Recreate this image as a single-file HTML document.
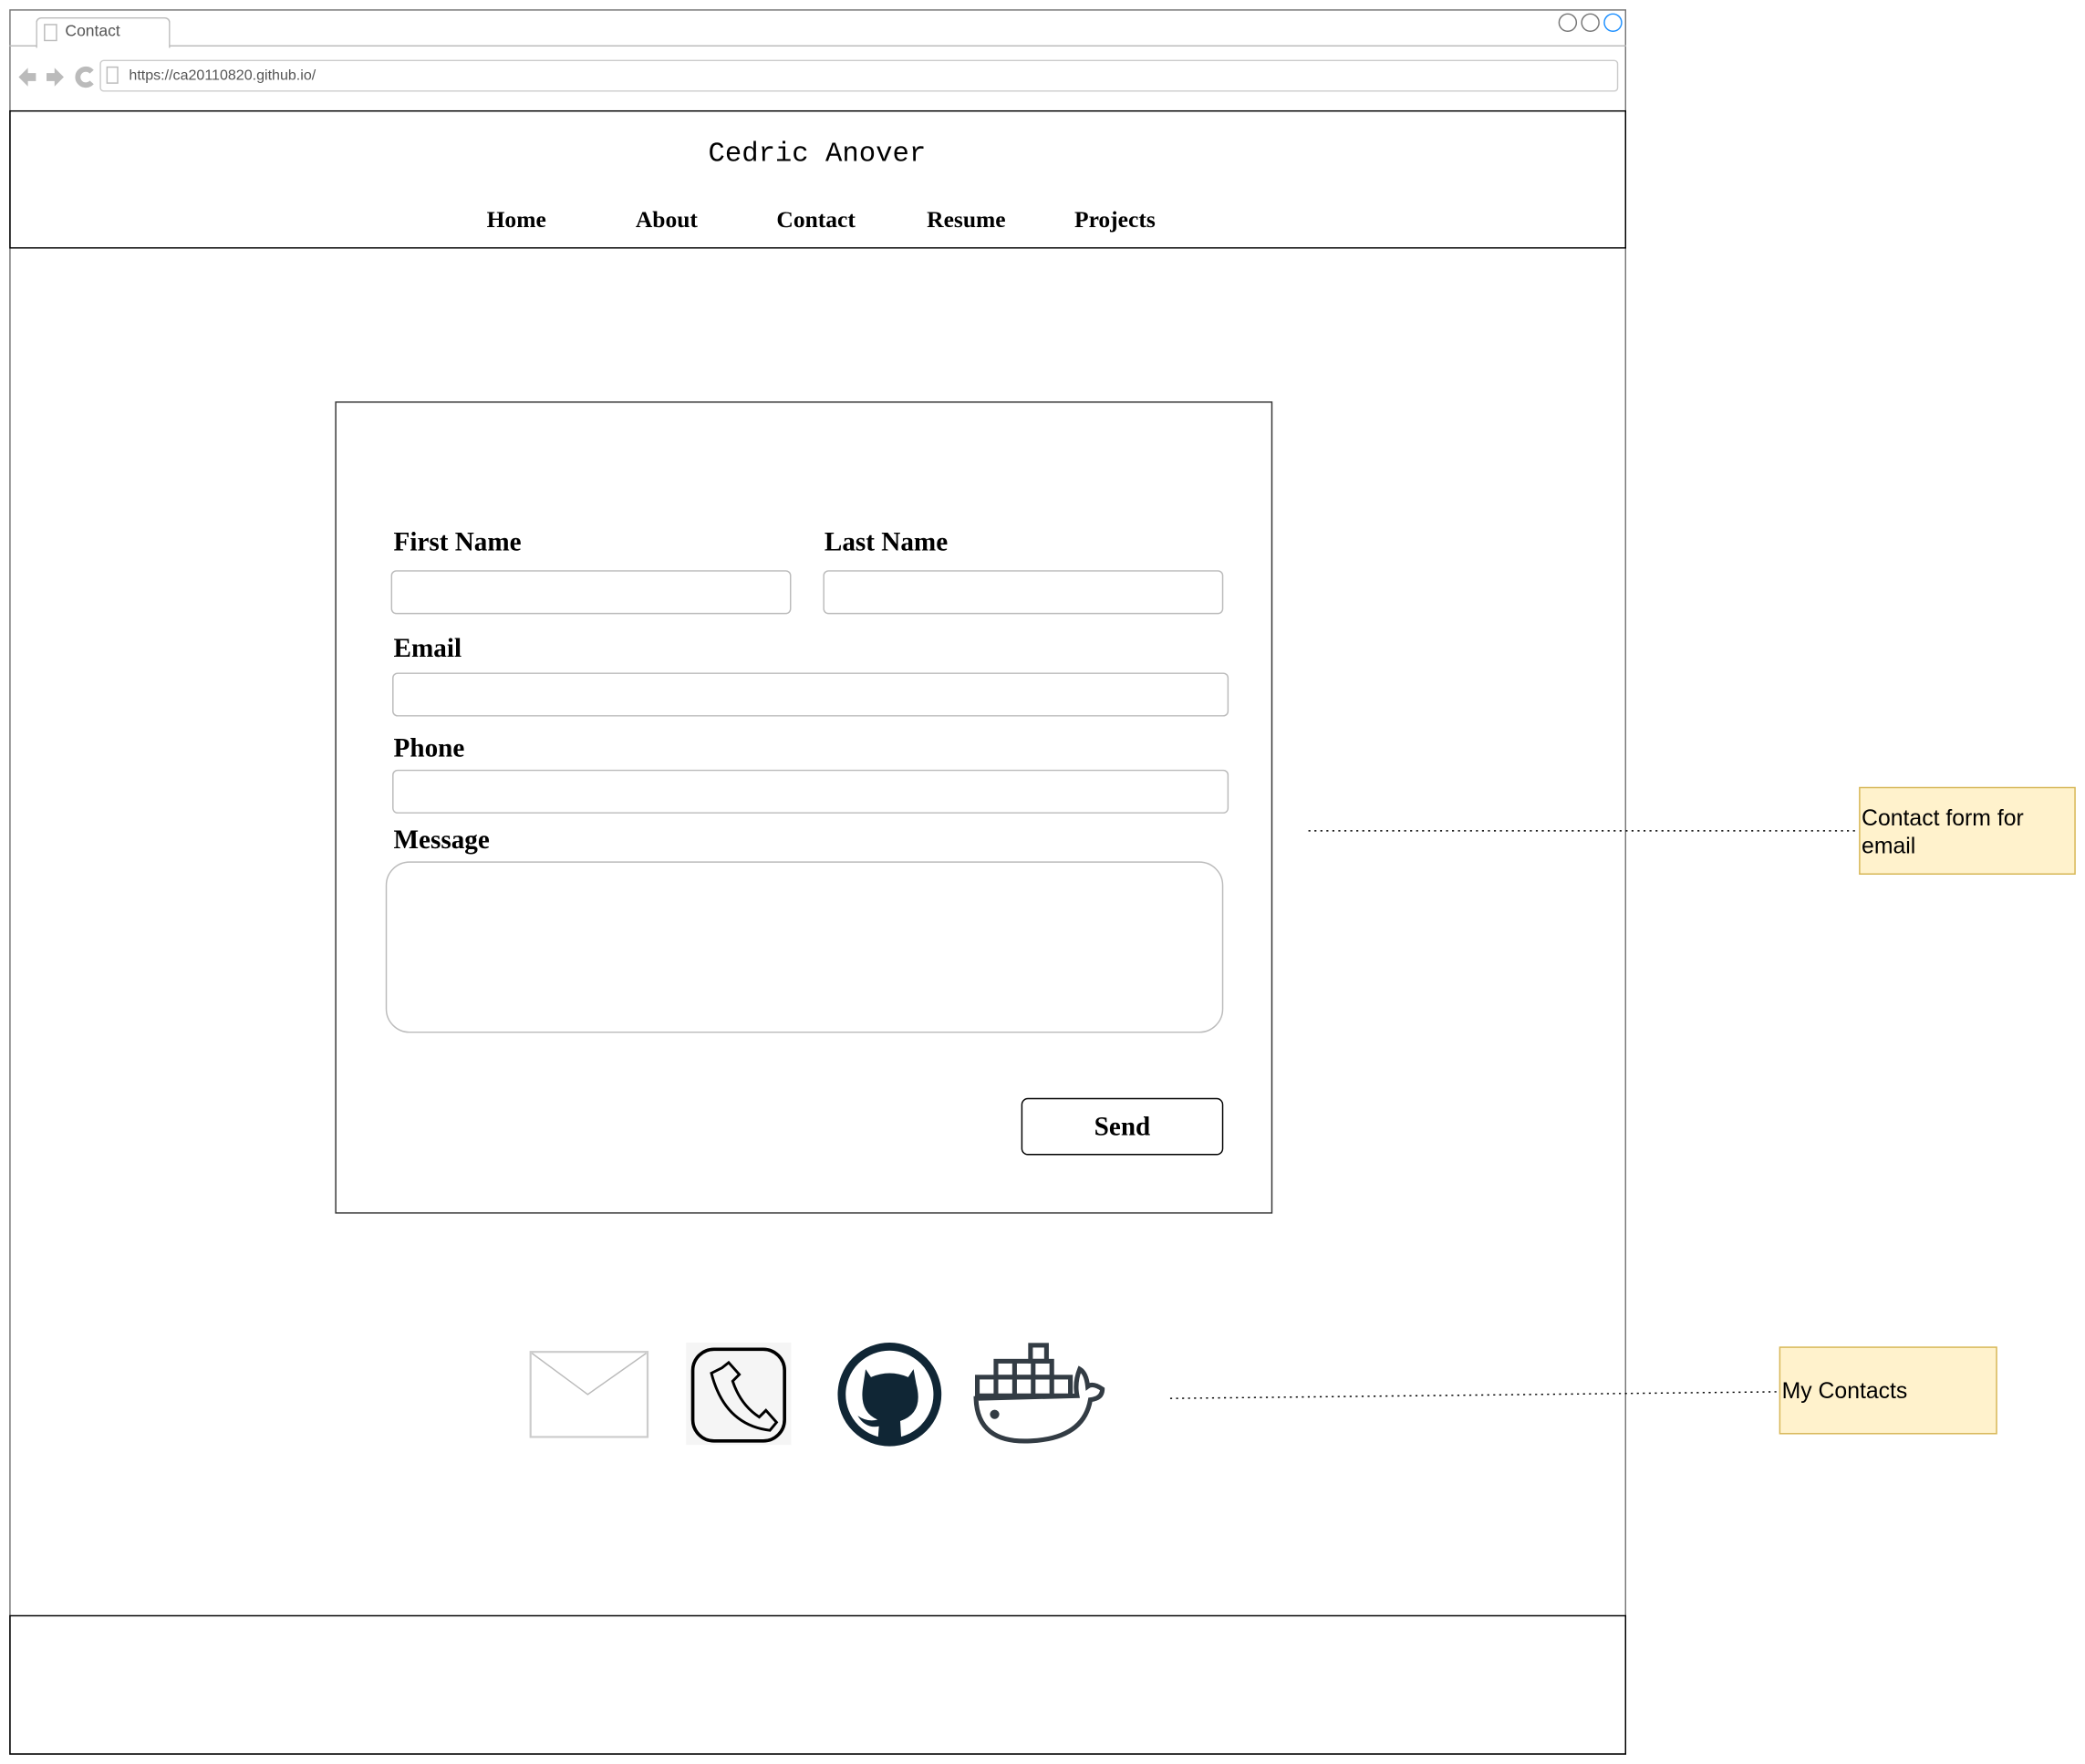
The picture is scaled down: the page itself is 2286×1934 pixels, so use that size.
<!DOCTYPE html>
<html><head><meta charset="utf-8"><style>
html,body{margin:0;padding:0;background:#fff;width:2286px;height:1934px;overflow:hidden}
#w{position:absolute;left:0;top:0;width:1568px;height:1327px;transform:scale(1.4579,1.4574);transform-origin:0 0}
.a{position:absolute;box-sizing:border-box}
.nav{position:absolute;top:155px;font:bold 17.5px "Liberation Serif",serif;color:#000}
.lbl{position:absolute;font:bold 20px "Liberation Serif",serif;color:#000}
.inp{position:absolute;box-sizing:border-box;border:1px solid #bbb;border-radius:4px;background:#fff}
.note{position:absolute;box-sizing:border-box;background:#fff2cc;border:1px solid #d6b656;font:17px "Liberation Sans",sans-serif;color:#000;padding:0 1px;line-height:21px}
</style></head><body><div id="w">
<div class="a" style="left:7px;top:7px;width:1216px;height:1313px;border:1px solid #777"></div>
<div class="a" style="left:7px;top:34px;width:1216px;height:1px;background:#bbb"></div>
<div class="a" style="left:27px;top:13px;width:101px;height:23px;border:1px solid #bbb;border-bottom:none;border-radius:4px 4px 0 0;background:#fff"></div>
<div class="a" style="left:33px;top:18px;width:10px;height:13px;border:1px solid #bbb"></div>
<div class="a" style="left:49px;top:16px;font:12px 'Liberation Sans',sans-serif;color:#555">Contact</div>
<div class="a" style="left:1172px;top:10px;width:14px;height:14px;border:1px solid #777;border-radius:50%"></div>
<div class="a" style="left:1189px;top:10px;width:14px;height:14px;border:1px solid #777;border-radius:50%"></div>
<div class="a" style="left:1206px;top:10px;width:14px;height:14px;border:1px solid #1e90ff;border-radius:50%"></div>
<svg class="a" style="left:12px;top:48px" width="64" height="20"><path d="M2 10 L9 3 V7 H15 V13 H9 V17 Z" fill="#bbb"/><path d="M36 10 L29 3 V7 H23 V13 H29 V17 Z" fill="#bbb"/><path d="M57 6 A6 6 0 1 0 57 14" stroke="#bbb" stroke-width="4" fill="none"/></svg>
<div class="a" style="left:75px;top:45px;width:1142px;height:24px;border:1px solid #ccc;border-radius:3px"></div>
<div class="a" style="left:80px;top:50px;width:9px;height:13px;border:1px solid #bbb"></div>
<div class="a" style="left:97px;top:51px;font:11px 'Liberation Sans',sans-serif;color:#555">https://ca20110820.github.io/</div>
<div class="a" style="left:7px;top:83px;width:1216px;height:104px;border:1px solid #000"></div>
<div class="a" style="left:0;width:1229px;top:105px;text-align:center;font:21px 'Liberation Mono',monospace">Cedric Anover</div>
<div class="nav" style="left:366px">Home</div><div class="nav" style="left:478px">About</div><div class="nav" style="left:584px">Contact</div><div class="nav" style="left:697px">Resume</div><div class="nav" style="left:808px">Projects</div>
<div class="a" style="left:252px;top:302px;width:705px;height:611px;border:1px solid #333"></div>
<div class="lbl" style="left:296px;top:397px">First Name</div>
<div class="lbl" style="left:620px;top:397px">Last Name</div>
<div class="inp" style="left:294px;top:429px;width:301px;height:33px"></div>
<div class="inp" style="left:619px;top:429px;width:301px;height:33px"></div>
<div class="lbl" style="left:296px;top:477px">Email</div>
<div class="inp" style="left:295px;top:506px;width:629px;height:33px"></div>
<div class="lbl" style="left:296px;top:552px">Phone</div>
<div class="inp" style="left:295px;top:579px;width:629px;height:33px"></div>
<div class="lbl" style="left:296px;top:621px">Message</div>
<div class="inp" style="left:290px;top:648px;width:630px;height:129px;border-radius:18px"></div>
<div class="a" style="left:768px;top:826px;width:152px;height:43px;border:1px solid #000;border-radius:5px;text-align:center;font:bold 20px 'Liberation Serif',serif;line-height:42px">Send</div>
<svg class="a" style="left:0;top:0" width="1568" height="1327">
<line x1="984" y1="625" x2="1398" y2="625" stroke="#000" stroke-dasharray="1.5 3"/>
<line x1="880" y1="1052" x2="1338" y2="1047" stroke="#000" stroke-dasharray="1.5 3"/>
<rect x="399" y="1017" width="88" height="64" fill="#fff" stroke="#ccc" stroke-width="1.5"/>
<path d="M400 1018 L442 1049 L486 1018" fill="none" stroke="#bbb"/>
<rect x="516" y="1010" width="79" height="77" fill="#f5f5f5"/>
<rect x="521" y="1015" width="69" height="69" rx="16" fill="none" stroke="#000" stroke-width="2.5"/>
<path d="M543 1029 L548 1025 L556 1034 L551 1039 Q557 1057 571 1066 L576 1061 L584 1070 L579 1076 Q545 1072 535 1033 Z" fill="none" stroke="#000" stroke-width="2"/>
<circle cx="669" cy="1049" r="36" fill="#fff" stroke="#102635" stroke-width="6"/>
<path d="M651 1030 L655 1036 Q669 1030 683 1036 L687 1030 L689 1041 Q695 1063 677 1069 L678 1086 L660 1086 L661 1073 Q651 1075 645 1065 Q652 1070 660 1068 Q646 1062 649 1043 Z" fill="#102635"/>
<g fill="none" stroke="#333c44" stroke-width="3.5">
<path d="M734 1052 Q735 1086 775 1084 Q815 1082 820 1053 Q829 1052 829 1045 Q822 1040 818 1043 Q817 1033 812 1030 Q808 1040 810 1050 L734 1052 Z"/>
<rect x="735" y="1036" width="70" height="14"/>
<rect x="749" y="1024" width="42" height="12"/>
<rect x="775" y="1012" width="12" height="12"/>
<path d="M749 1036 V1050 M763 1024 V1050 M777 1024 V1050 M791 1036 V1050"/>
</g>
<circle cx="748" cy="1064" r="3.5" fill="#333c44"/>
</svg>
<div class="note" style="left:1398px;top:592px;width:163px;height:66px;padding-top:12px">Contact form for email</div>
<div class="note" style="left:1338px;top:1013px;width:164px;height:66px;line-height:66px">My Contacts</div>
<div class="a" style="left:7px;top:1215px;width:1216px;height:105px;border:1px solid #000"></div>
</div></body></html>
